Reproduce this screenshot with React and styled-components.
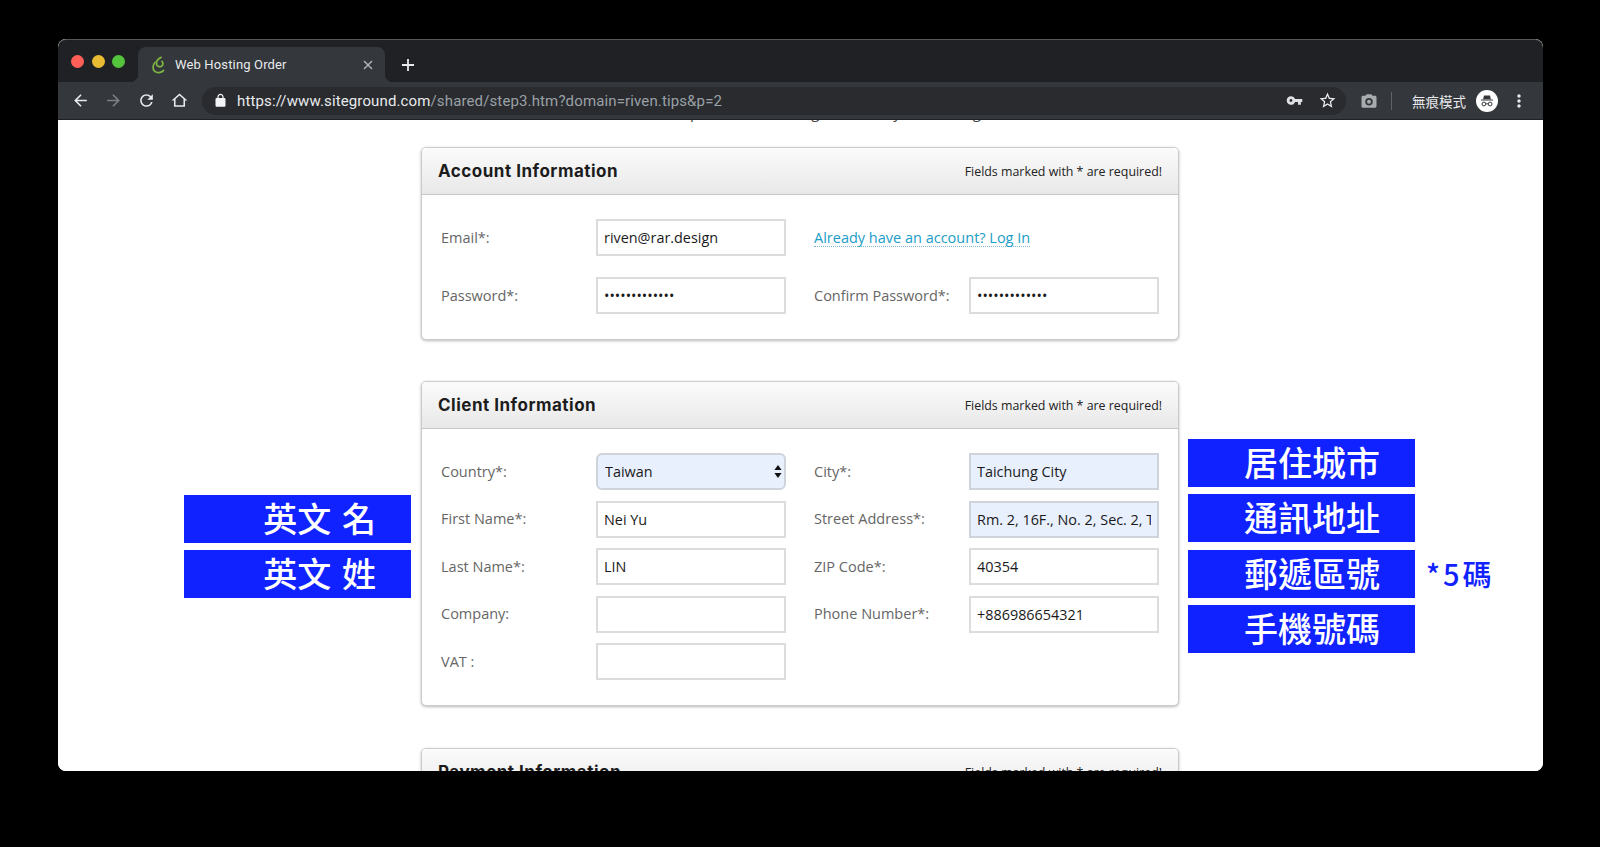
import React from "react";
import styled, { createGlobalStyle } from "styled-components";

const Global = createGlobalStyle`
  html, body { margin: 0; padding: 0; background: #000; height: 847px; overflow: hidden; }
  * { box-sizing: border-box; }
`;

const Window = styled.div`
  position: relative;
  margin: 39px 0 0 58px;
  width: 1485px;
  height: 732px;
  border-radius: 8px;
  overflow: hidden;
  display: flex;
  flex-direction: column;
  background: #fff;
`;

const TabStrip = styled.div`
  height: 43px;
  flex: none;
  background: #202124;
  border-top: 1px solid #55575a;
  border-radius: 8px 8px 0 0;
  display: flex;
  align-items: flex-start;
`;

const Lights = styled.div`
  width: 80px;
  padding: 15px 0 0 13px;
  display: flex;
  gap: 7.5px;
  flex: none;
`;

const Light = styled.span`
  width: 13px;
  height: 13px;
  border-radius: 50%;
  background: ${(p) => p.$color};
`;

const Tab = styled.div`
  position: relative;
  margin-top: 7px;
  width: 247px;
  height: 35px;
  background: #34373b;
  border-radius: 8px 8px 0 0;
  display: flex;
  align-items: center;
  padding: 0 9px 0 12px;
  &::before, &::after {
    content: "";
    position: absolute;
    bottom: 0;
    width: 8px;
    height: 8px;
  }
  &::before { left: -8px; background: radial-gradient(circle at 0 0, transparent 8px, #34373b 8.5px); }
  &::after { right: -8px; background: radial-gradient(circle at 100% 0, transparent 8px, #34373b 8.5px); }
`;

const TabTitle = styled.span`
  flex: 1;
  margin-left: 7px;
  font: 13px Roboto, "Liberation Sans", sans-serif;
  color: #e8eaed;
  letter-spacing: 0.15px;
`;

const TabClose = styled.span`
  width: 16px;
  height: 16px;
  flex: none;
  display: flex;
  align-items: center;
  justify-content: center;
  color: #b4b7ba;
`;

const NewTab = styled.div`
  margin: 14px 0 0 12px;
  width: 22px;
  height: 22px;
  color: #e8eaed;
`;

const Toolbar = styled.div`
  height: 38px;
  flex: none;
  background: #34373b;
  border-bottom: 1px solid #1f2124;
  display: flex;
  align-items: center;
  padding-left: 6px;
`;

const ToolButton = styled.div`
  width: 33px;
  height: 28px;
  flex: none;
  display: flex;
  align-items: center;
  justify-content: center;
  margin-left: ${(p) => p.$shift || 0}px;
  color: ${(p) => p.$color || "#e8eaed"};
`;

const Omnibox = styled.div`
  margin-left: 6px;
  flex: 1;
  height: 28px;
  border-radius: 14px;
  background: #292b2f;
  color: #f1f3f4;
  display: flex;
  align-items: center;
  padding: 0 2px 0 11px;
`;

const Url = styled.div`
  flex: 1;
  margin-left: 9px;
  font: 15px Roboto, "Liberation Sans", sans-serif;
  letter-spacing: 0.13px;
  color: #e8eaed;
  span { color: #9aa0a6; }
`;

const ToolRight = styled.div`
  width: 197px;
  flex: none;
  display: flex;
  align-items: center;
  padding-left: 6px;
`;

const Divider = styled.div`
  width: 1px;
  height: 18px;
  margin: 0 20px 0 6px;
  background: #5f6368;
`;

const Incognito = styled.span`
  font: 13.5px "Noto Sans CJK TC", sans-serif;
  color: #e8eaed;
  white-space: nowrap;
`;

const Avatar = styled.div`
  width: 22px;
  height: 22px;
  margin-left: 10px;
  border-radius: 50%;
  background: #fff;
  flex: none;
  display: flex;
  align-items: center;
  justify-content: center;
`;

const Page = styled.div`
  flex: 1;
  min-height: 0;
  overflow: hidden;
  display: flex;
  flex-direction: column;
  align-items: center;
  padding-right: 1px;
  background: #fff;
  font-family: "Open Sans", sans-serif;
`;

const Intro = styled.p`
  margin: -18px 0 0;
  padding-left: 6px;
  height: 45px;
  flex: none;
  font: 15px/20px "Open Sans", sans-serif;
  color: #444;
  white-space: nowrap;
`;

const Card = styled.section`
  width: 758px;
  flex: none;
  margin-bottom: ${(p) => p.$gap || 41}px;
  background: #fff;
  border: 1px solid #ccc;
  border-radius: 5px;
  box-shadow: 0 1px 3px rgba(0, 0, 0, 0.28);
`;

const CardHeader = styled.header`
  height: 47px;
  padding: 0 16px;
  display: flex;
  align-items: center;
  justify-content: space-between;
  background: linear-gradient(#fbfbfb, #e8e8e8);
  border-bottom: 1px solid #c6c6c6;
  border-radius: 4px 4px 0 0;
`;

const CardTitle = styled.h2`
  margin: 0;
  font: 700 17px Inter, "Open Sans", sans-serif;
  letter-spacing: 0.5px;
  color: #1c1c1c;
`;

const Required = styled.span`
  font: 12.4px "Open Sans", sans-serif;
  color: #222;
`;

const CardBody = styled.div`
  padding: 24px 19px 25px;
  display: grid;
  grid-template-columns: 345px 345px;
  column-gap: 28px;
  row-gap: ${(p) => p.$rowGap}px;
`;

const Field = styled.div`
  display: flex;
  align-items: center;
  height: 37px;
`;

const Label = styled.label`
  width: 155px;
  flex: none;
  margin-top: -1px;
  font: 14.5px "Open Sans", sans-serif;
  color: #666;
`;

const TextBox = styled.input`
  width: 190px;
  height: 37px;
  padding: 0 6px;
  border: 2px solid ${(p) => (p.$filled ? "#cfd3da" : "#dcdcdc")};
  border-radius: 0;
  outline: none;
  background: ${(p) => (p.$filled ? "#e8f0fe" : "#fff")};
  font: 14.4px "Open Sans", sans-serif;
  color: #1a1a1a;
`;

const SelectWrap = styled.div`
  position: relative;
  width: 190px;
  height: 37px;
`;

const SelectBox = styled.select`
  appearance: none;
  width: 100%;
  height: 100%;
  padding: 0 7px;
  border: 2px solid #cfd3da;
  border-radius: 6px;
  outline: none;
  background: #e8f0fe;
  font: 14.4px "Open Sans", sans-serif;
  color: #1a1a1a;
`;

const SelectArrows = styled.svg`
  position: absolute;
  right: 4px;
  top: 12px;
  width: 8px;
  height: 13px;
`;

const LoginLink = styled.a`
  font: 14.5px "Open Sans", sans-serif;
  color: #1b9dc6;
  text-decoration: none;
  border-bottom: 1px dotted #7fb6d8;
  line-height: 17px;
  margin-top: 1px;
`;

const NoteColumn = styled.div`
  position: absolute;
  left: ${(p) => p.$left}px;
  top: ${(p) => p.$top}px;
  display: flex;
  flex-direction: column;
  gap: 7.3px;
`;

const NoteRow = styled.div`
  display: flex;
  align-items: center;
`;

const Note = styled.div`
  width: 227px;
  height: 48px;
  background: #0f22ff;
  color: #fff;
  text-align: right;
  padding-right: 35px;
  font: 500 34px/46px "Noto Sans CJK TC", sans-serif;
  word-spacing: 3px;
  white-space: pre;
`;

const Aside = styled.span`
  margin-left: 11px;
  font: 500 29px/1 "Noto Sans CJK TC", sans-serif;
  letter-spacing: 3px;
  color: #0f22ff;
  white-space: nowrap;
`;

const Icon = ({ d, size = 18 }) => (
  <svg width={size} height={size} viewBox="0 0 24 24" fill="currentColor">
    <path d={d} />
  </svg>
);

const Favicon = () => (
  <svg width="18" height="20" viewBox="0 0 18 20" fill="none" stroke="#7cb342" strokeWidth="1.8" strokeLinecap="round" style={{ flex: "none" }}>
    <path d="M5 7.5C2.6 10 2.4 14 4.6 16.2 7 18.4 11.4 18 13.6 15.4" />
    <path d="M11 2.4C8 4 5.8 6.6 6.6 9.4 7.2 11.4 9.4 12.2 11.2 11.4 13.2 10.4 13.4 8 12 6.4" />
  </svg>
);

const paths = {
  back: "M20 11H7.83l5.59-5.59L12 4l-8 8 8 8 1.41-1.41L7.83 13H20v-2z",
  forward: "M4 11h12.17l-5.59-5.59L12 4l8 8-8 8-1.41-1.41L16.17 13H4v-2z",
  reload: "M17.65 6.35A7.958 7.958 0 0 0 12 4c-4.42 0-7.99 3.58-7.99 8s3.57 8 7.99 8c3.73 0 6.84-2.55 7.73-6h-2.08A5.99 5.99 0 0 1 12 18c-3.31 0-6-2.69-6-6s2.69-6 6-6c1.66 0 3.14.69 4.22 1.78L13 11h7V4l-2.35 2.35z",
  home: "M12 5.69l5 4.5V18H7v-7.81l5-4.5M12 3L2 12h3v8h14v-8h3L12 3z",
  lock: "M18 8h-1V6c0-2.76-2.24-5-5-5S7 3.24 7 6v2H6c-1.1 0-2 .9-2 2v10c0 1.1.9 2 2 2h12c1.1 0 2-.9 2-2V10c0-1.1-.9-2-2-2zM9 8V6c0-1.66 1.34-3 3-3s3 1.34 3 3v2H9z",
  key: "M12.65 10A5.99 5.99 0 0 0 7 6c-3.31 0-6 2.69-6 6s2.69 6 6 6a5.99 5.99 0 0 0 5.65-4H17v4h4v-4h2v-4H12.65zM7 14c-1.1 0-2-.9-2-2s.9-2 2-2 2 .9 2 2-.9 2-2 2z",
  star: "M22 9.24l-7.19-.62L12 2 9.19 8.63 2 9.24l5.46 4.73L5.82 21 12 17.27 18.18 21l-1.63-7.03L22 9.24zM12 15.4l-3.76 2.27 1-4.28-3.32-2.88 4.38-.38L12 6.1l1.71 4.04 4.38.38-3.32 2.88 1 4.28L12 15.4z",
  camera: "M9 3 7.2 5H4c-1.1 0-2 .9-2 2v12c0 1.1.9 2 2 2h16c1.1 0 2-.9 2-2V7c0-1.1-.9-2-2-2h-3.2L15 3H9zm3 15a5 5 0 1 1 0-10 5 5 0 0 1 0 10zm0-2.4a2.6 2.6 0 1 0 0-5.2 2.6 2.6 0 0 0 0 5.2z",
  dots: "M12 8c1.1 0 2-.9 2-2s-.9-2-2-2-2 .9-2 2 .9 2 2 2zm0 2c-1.1 0-2 .9-2 2s.9 2 2 2 2-.9 2-2-.9-2-2-2zm0 6c-1.1 0-2 .9-2 2s.9 2 2 2 2-.9 2-2-.9-2-2-2z",
};

const Header = ({ title }) => (
  <CardHeader>
    <CardTitle>{title}</CardTitle>
    <Required>Fields marked with * are required!</Required>
  </CardHeader>
);

const Input = ({ label, value, type = "text", filled }) => (
  <Field>
    <Label>{label}</Label>
    <TextBox type={type} defaultValue={value} readOnly $filled={filled} />
  </Field>
);

export default function App() {
  return (
    <>
      <Global />
      <Window>
        <TabStrip>
          <Lights>
            <Light $color="#ff5f57" />
            <Light $color="#e8bb33" />
            <Light $color="#54c43c" />
          </Lights>
          <Tab>
            <Favicon />
            <TabTitle>Web Hosting Order</TabTitle>
            <TabClose>
              <svg width="12" height="12" viewBox="0 0 12 12" stroke="currentColor" strokeWidth="1.4">
                <path d="M2 2l8 8M10 2l-8 8" />
              </svg>
            </TabClose>
          </Tab>
          <NewTab>
            <svg width="22" height="22" viewBox="0 0 22 22" stroke="currentColor" strokeWidth="1.8">
              <path d="M11 5v12M5 11h12" />
            </svg>
          </NewTab>
        </TabStrip>
        <Toolbar>
          <ToolButton><Icon d={paths.back} size={19} /></ToolButton>
          <ToolButton $color="#7d8084"><Icon d={paths.forward} size={19} /></ToolButton>
          <ToolButton><Icon d={paths.reload} size={19} /></ToolButton>
          <ToolButton><Icon d={paths.home} size={19} /></ToolButton>
          <Omnibox>
            <Icon d={paths.lock} size={15} />
            <Url>https://www.siteground.com<span>/shared/step3.htm?domain=riven.tips&amp;p=2</span></Url>
            <ToolButton $color="#dfe1e5"><Icon d={paths.key} size={17} /></ToolButton>
            <ToolButton><Icon d={paths.star} size={19} /></ToolButton>
          </Omnibox>
          <ToolRight>
            <ToolButton $color="#a9acaf"><Icon d={paths.camera} size={18} /></ToolButton>
            <Divider />
            <Incognito>無痕模式</Incognito>
            <Avatar>
              <svg width="18" height="18" viewBox="0 0 18 18" fill="none" stroke="#35363a">
                <path d="M6 3.6h6l.9 3.6H5.1z" fill="#35363a" stroke="none" />
                <path d="M3 8h12" strokeWidth="1.1" />
                <circle cx="5.9" cy="12" r="1.9" strokeWidth="1" />
                <circle cx="12.1" cy="12" r="1.9" strokeWidth="1" />
                <path d="M7.8 11.8h2.4" strokeWidth="0.9" />
              </svg>
            </Avatar>
            <ToolButton $shift={4}><Icon d={paths.dots} size={20} /></ToolButton>
          </ToolRight>
        </Toolbar>
        <Page>
          <Intro>Now let us complete the following details so your hosting order</Intro>
          <Card>
            <Header title="Account Information" />
            <CardBody $rowGap={21}>
              <Input label="Email*:" value="riven@rar.design" />
              <Field><LoginLink href="#">Already have an account? Log In</LoginLink></Field>
              <Input label="Password*:" value="•••••••••••••" type="password" />
              <Input label="Confirm Password*:" value="•••••••••••••" type="password" />
            </CardBody>
          </Card>
          <Card $gap={42}>
            <Header title="Client Information" />
            <CardBody $rowGap={10.5}>
              <Field>
                <Label>Country*:</Label>
                <SelectWrap>
                  <SelectBox defaultValue="Taiwan"><option>Taiwan</option></SelectBox>
                  <SelectArrows viewBox="0 0 8 13" fill="#111">
                    <path d="M4 0l3.6 5H.4zM4 13L.4 8h7.2z" />
                  </SelectArrows>
                </SelectWrap>
              </Field>
              <Input label="City*:" value="Taichung City" filled />
              <Input label="First Name*:" value="Nei Yu" />
              <Input label="Street Address*:" value="Rm. 2, 16F., No. 2, Sec. 2, Taiwan Blvd." filled />
              <Input label="Last Name*:" value="LIN" />
              <Input label="ZIP Code*:" value="40354" />
              <Input label="Company:" value="" />
              <Input label="Phone Number*:" value="+886986654321" />
              <Input label="VAT :" value="" />
            </CardBody>
          </Card>
          <Card>
            <Header title="Payment Information" />
          </Card>
        </Page>
        <NoteColumn $left={126} $top={456}>
          <Note>英文 名</Note>
          <Note>英文 姓</Note>
        </NoteColumn>
        <NoteColumn $left={1130} $top={400}>
          <Note>居住城市</Note>
          <Note>通訊地址</Note>
          <NoteRow>
            <Note>郵遞區號</Note>
            <Aside>*5碼</Aside>
          </NoteRow>
          <Note>手機號碼</Note>
        </NoteColumn>
      </Window>
    </>
  );
}
